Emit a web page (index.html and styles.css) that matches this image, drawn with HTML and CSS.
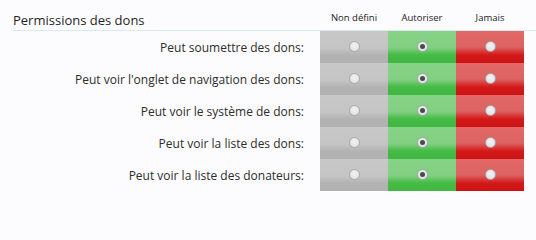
FILE: index.html
```html
<!DOCTYPE html>
<html lang="fr">
<head>
<meta charset="utf-8">
<link rel="stylesheet" href="styles.css">
</head>
<body>
<div class="perms">
  <div class="head">
    <h3 class="title">Permissions des dons</h3>
    <div class="col-labels">
      <span class="col-label">Non défini</span>
      <span class="col-label">Autoriser</span>
      <span class="col-label">Jamais</span>
    </div>
  </div>
  <div class="rows">
    <div class="row">
      <div class="label">Peut soumettre des dons:</div>
      <div class="cell unset"><span class="radio"></span></div>
      <div class="cell allow"><span class="radio checked"></span></div>
      <div class="cell never"><span class="radio"></span></div>
    </div>
    <div class="row">
      <div class="label">Peut voir l'onglet de navigation des dons:</div>
      <div class="cell unset"><span class="radio"></span></div>
      <div class="cell allow"><span class="radio checked"></span></div>
      <div class="cell never"><span class="radio"></span></div>
    </div>
    <div class="row">
      <div class="label">Peut voir le système de dons:</div>
      <div class="cell unset"><span class="radio"></span></div>
      <div class="cell allow"><span class="radio checked"></span></div>
      <div class="cell never"><span class="radio"></span></div>
    </div>
    <div class="row">
      <div class="label">Peut voir la liste des dons:</div>
      <div class="cell unset"><span class="radio"></span></div>
      <div class="cell allow"><span class="radio checked"></span></div>
      <div class="cell never"><span class="radio"></span></div>
    </div>
    <div class="row">
      <div class="label">Peut voir la liste des donateurs:</div>
      <div class="cell unset"><span class="radio"></span></div>
      <div class="cell allow"><span class="radio checked"></span></div>
      <div class="cell never"><span class="radio"></span></div>
    </div>
  </div>
</div>
</body>
</html>
```
FILE: styles.css
```css
html, body {
  margin: 0;
  padding: 0;
  background: #fcfcfe;
}
body {
  font-family: "Open Sans", Lato, sans-serif;
  color: #2a2a2a;
}
.perms {
  padding-left: 13px;
}
.head {
  display: flex;
  align-items: flex-end;
  height: 30px;
  border-bottom: 1px solid #d9e9f1;
}
.title {
  margin: 0;
  font-size: 13px;
  font-weight: normal;
  width: 307px;
  padding-bottom: 1px;
  color: #1f1f1f;
}
.col-labels {
  display: flex;
  padding-bottom: 6px;
}
.col-label {
  width: 68px;
  text-align: center;
  font-size: 9.5px;
  color: #222;
}
.rows {
  display: flex;
  flex-direction: column;
}
.row {
  display: flex;
  height: 32px;
}
.label {
  width: 307px;
  box-sizing: border-box;
  padding-right: 16px;
  padding-top: 8px;
  text-align: right;
  font-size: 12px;
  color: #2c2c2c;
}
.cell {
  width: 68px;
  display: flex;
  justify-content: center;
  padding-top: 10px;
  box-sizing: border-box;
}
.unset {
  background: linear-gradient(to bottom, #c7c7c7 0%, #c5c5c5 52%, #b3b3b3 75%, #b1b1b1 100%);
}
.allow {
  background: linear-gradient(to bottom, #86d286 0%, #82d082 52%, #45ba45 75%, #40b840 100%);
}
.never {
  background: linear-gradient(to bottom, #e16868 0%, #de6262 50%, #d21a1a 75%, #ce1212 100%);
}
.radio {
  width: 11px;
  height: 11px;
  border-radius: 50%;
  box-sizing: border-box;
  background: radial-gradient(circle at 50% 40%, #f2f2f2 0%, #dedede 100%);
  border: 1px solid #a9a9a9;
  position: relative;
}
.radio.checked::after {
  content: "";
  position: absolute;
  left: 2px;
  top: 2px;
  width: 5px;
  height: 5px;
  border-radius: 50%;
  background: #4a4a4a;
}
```
